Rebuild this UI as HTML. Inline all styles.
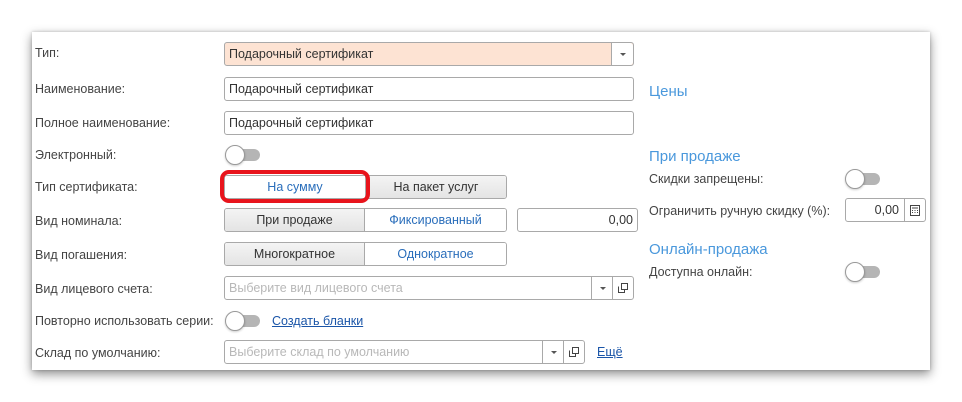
<!DOCTYPE html>
<html><head><meta charset="utf-8"><style>
*{box-sizing:border-box;margin:0;padding:0}
body{width:962px;height:402px;background:#fff;font-family:"Liberation Sans","DejaVu Sans",sans-serif;font-size:12.5px;color:#444;position:relative;overflow:hidden}
.panel{position:absolute;left:32px;top:32px;width:898px;height:338px;background:#fff;box-shadow:0 4px 10px rgba(0,0,0,.45),0 0 3px rgba(0,0,0,.2)}
.a{position:absolute;white-space:nowrap}
.lbl{position:absolute;left:35px;white-space:nowrap}
.inp{position:absolute;border:1px solid #a9a9a9;border-radius:3px;background:#fff;height:24px;line-height:22px;padding-left:4px;color:#333;font-size:12.5px}
.ph{color:#b8b8b8}
.btnpart{position:absolute;top:0;bottom:0;border-left:1px solid #a9a9a9;width:22px}
.arr{position:absolute;left:8px;top:10px;border-left:3px solid transparent;border-right:3px solid transparent;border-top:3px solid #555}
.tog{position:absolute;width:35px;height:16px}
.tog .t{position:absolute;left:5px;top:2px;width:30px;height:12px;border-radius:6px;background:#b5b5b5}
.tog .k{position:absolute;left:0;top:-2px;width:20px;height:20px;border-radius:50%;background:#fff;border:1px solid #999;box-shadow:0 1px 2px rgba(0,0,0,.2)}
.seg{position:absolute;border:1px solid #a9a9a9;border-radius:3px;height:24px;overflow:hidden;display:flex}
.seg div{text-align:center;line-height:22px}
.on{background:linear-gradient(#f4f4f4,#e4e4e4);color:#333}
.off{background:#fff;color:#2a6ebb}
.h{position:absolute;color:#4a98dc;font-size:15px;white-space:nowrap}
a{color:#1a55a8;text-decoration:underline}
</style></head><body>
<div class="panel"></div>

<div class="lbl" style="top:46px">Тип:</div>
<div class="inp" style="left:224px;top:42px;width:410px;background:#fde3d3">Подарочный сертификат<div class="btnpart" style="right:0;background:#fff;border-radius:0 3px 3px 0"><div class="arr"></div></div></div>

<div class="lbl" style="top:82px">Наименование:</div>
<div class="inp" style="left:224px;top:77px;width:410px">Подарочный сертификат</div>

<div class="lbl" style="top:116px">Полное наименование:</div>
<div class="inp" style="left:224px;top:111px;width:410px">Подарочный сертификат</div>

<div class="lbl" style="top:148px">Электронный:</div>
<div class="tog" style="left:225px;top:147px"><div class="t"></div><div class="k"></div></div>

<div class="lbl" style="top:180px">Тип сертификата:</div>
<div class="seg" style="left:224px;top:175px;width:283px"><div class="off" style="width:140px">На сумму</div><div class="on" style="flex:1;border-left:1px solid #a9a9a9">На пакет услуг</div></div>
<div class="a" style="left:220px;top:170px;width:150px;height:33px;border:4px solid #e8141c;border-radius:9px"></div>

<div class="lbl" style="top:214px">Вид номинала:</div>
<div class="seg" style="left:224px;top:208px;width:283px"><div class="on" style="width:139px">При продаже</div><div class="off" style="flex:1;border-left:1px solid #a9a9a9">Фиксированный</div></div>
<div class="inp" style="left:517px;top:208px;width:121px;text-align:right;padding-right:4px">0,00</div>

<div class="lbl" style="top:248px">Вид погашения:</div>
<div class="seg" style="left:224px;top:242px;width:283px"><div class="on" style="width:139px">Многократное</div><div class="off" style="flex:1;border-left:1px solid #a9a9a9">Однократное</div></div>

<div class="lbl" style="top:282px">Вид лицевого счета:</div>
<div class="inp ph" style="left:224px;top:276px;width:410px">Выберите вид лицевого счета<div class="btnpart" style="right:21px;width:21px"><div class="arr"></div></div><div class="btnpart" style="right:0;width:21px"><svg style="position:absolute;left:5px;top:6px" width="10" height="10" viewBox="0 0 10 10" fill="none" stroke="#444" stroke-width="1"><rect x="3.5" y="0.5" width="6" height="6"/><path d="M0.5 3.5V9.5H6.5V7"/></svg></div></div>

<div class="lbl" style="top:314px">Повторно использовать серии:</div>
<div class="tog" style="left:225px;top:313px"><div class="t"></div><div class="k"></div></div>
<div class="a" style="left:272px;top:314px"><a>Создать бланки</a></div>

<div class="lbl" style="top:346px">Склад по умолчанию:</div>
<div class="inp ph" style="left:224px;top:340px;width:361px">Выберите склад по умолчанию<div class="btnpart" style="right:21px;width:21px"><div class="arr"></div></div><div class="btnpart" style="right:0;width:21px"><svg style="position:absolute;left:5px;top:6px" width="10" height="10" viewBox="0 0 10 10" fill="none" stroke="#444" stroke-width="1"><rect x="3.5" y="0.5" width="6" height="6"/><path d="M0.5 3.5V9.5H6.5V7"/></svg></div></div>
<div class="a" style="left:597px;top:345px"><a>Ещё</a></div>

<div class="h" style="left:649px;top:83px">Цены</div>
<div class="h" style="left:649px;top:148px">При продаже</div>
<div class="a" style="left:649px;top:172px">Скидки запрещены:</div>
<div class="tog" style="left:845px;top:171px"><div class="t"></div><div class="k"></div></div>
<div class="a" style="left:649px;top:204px">Ограничить ручную скидку (%):</div>
<div class="inp" style="left:845px;top:198px;width:81px;text-align:right;padding-right:26px">0,00<div class="btnpart" style="right:0;width:21px"><svg style="position:absolute;left:5px;top:6px" width="10" height="11" viewBox="0 0 10 11" fill="none" stroke="#444" stroke-width="1"><rect x="0.5" y="0.5" width="9" height="10"/><path d="M2 3H8M2 5.5H3M4.5 5.5H5.5M7 5.5H8M2 7.5H3M4.5 7.5H5.5M7 7.5H8"/></svg></div></div>
<div class="h" style="left:649px;top:241px">Онлайн-продажа</div>
<div class="a" style="left:649px;top:265px">Доступна онлайн:</div>
<div class="tog" style="left:845px;top:264px"><div class="t"></div><div class="k"></div></div>
</body></html>
